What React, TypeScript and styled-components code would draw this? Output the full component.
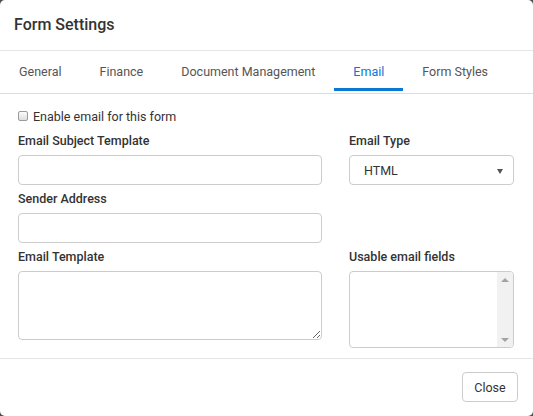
import React from "react";
import styled, { createGlobalStyle } from "styled-components";

const Global = createGlobalStyle`
  html, body { margin: 0; padding: 0; }
  body {
    background: #4d4d4d;
    font-family: Roboto, "Liberation Sans", Arial, sans-serif;
    color: #333;
  }
  * { box-sizing: border-box; }
`;

const Modal = styled.div`
  width: 533px;
  height: 416px;
  background: #fff;
  border-radius: 5px;
  display: flex;
  flex-direction: column;
  overflow: hidden;
`;

const Header = styled.div`
  height: 51px;
  padding: 0 14px;
  display: flex;
  align-items: center;
  border-bottom: 1px solid #e5e5e5;
`;

const Title = styled.h4`
  margin: 0;
  font-size: 16px;
  font-weight: 500;
  color: #333;
  line-height: 20px;
  padding-bottom: 1px;
`;

const TabBar = styled.div`
  display: flex;
  padding-bottom: 2px;
  border-bottom: 1px solid #ddd;
`;

const Tab = styled.div<{ $active?: boolean }>`
  height: 40px;
  padding: 3px 19px 0;
  display: flex;
  align-items: center;
  font-size: 12.5px;
  color: ${(p) => (p.$active ? "#0a78d7" : "#555")};
  border-bottom: 3px solid ${(p) => (p.$active ? "#0a78d7" : "transparent")};
  white-space: nowrap;
`;

const Body = styled.div`
  padding: 13px 19px 10px 18px;
  flex: 1;
`;

const CheckRow = styled.label`
  display: flex;
  align-items: center;
  gap: 5px;
  height: 18px;
  font-size: 12.5px;
  color: #333;
  margin-bottom: 7px;
`;

const Check = styled.input`
  appearance: none;
  width: 10px;
  height: 10px;
  margin: 0;
  border: 1px solid #9a9a9a;
  border-radius: 2px;
  background: linear-gradient(#fcfcfc, #dedede);
`;

const Row = styled.div`
  display: grid;
  grid-template-columns: 304px 165px;
  column-gap: 27px;
  align-items: start;
`;

const Column = styled.div`
  display: flex;
  flex-direction: column;
`;

const Group = styled.div`
  display: flex;
  flex-direction: column;
  margin-bottom: 5px;
`;

const Label = styled.div`
  font-size: 12.5px;
  font-weight: 500;
  line-height: 18px;
  color: #333;
  margin-bottom: 5px;
`;

const TextInput = styled.input`
  height: 30px;
  width: 100%;
  border: 1px solid #ccc;
  border-radius: 4px;
  padding: 0 12px;
  font-family: inherit;
  font-size: 12.5px;
  margin: 0;
`;

const SelectBox = styled.div`
  height: 30px;
  border: 1px solid #ccc;
  border-radius: 4px;
  padding: 0 10px 0 14px;
  display: flex;
  align-items: center;
  justify-content: space-between;
  font-size: 12.5px;
  color: #333;
`;

const Caret = styled.span`
  width: 0;
  height: 0;
  border-left: 3px solid transparent;
  border-right: 3px solid transparent;
  border-top: 5px solid #555;
  margin-top: 2px;
`;

const TextArea = styled.textarea`
  height: 69px;
  width: 100%;
  border: 1px solid #ccc;
  border-radius: 4px;
  padding: 6px 12px;
  font-family: inherit;
  font-size: 12.5px;
  margin: 0;
  display: block;
  resize: vertical;
`;

const ListBox = styled.div`
  height: 77px;
  border: 1px solid #ccc;
  border-radius: 4px;
  display: flex;
  overflow: hidden;
`;

const ListArea = styled.div`
  flex: 1;
`;

const ScrollTrack = styled.div`
  width: 16px;
  background: #f1f1f1;
  display: flex;
  flex-direction: column;
  justify-content: space-between;
  align-items: center;
  padding: 6px 0 5px;
`;

const Arrow = styled.span<{ $down?: boolean }>`
  width: 0;
  height: 0;
  border-left: 4px solid transparent;
  border-right: 4px solid transparent;
  ${(p) =>
    p.$down
      ? "border-top: 4px solid #a3a3a3;"
      : "border-bottom: 4px solid #a3a3a3;"}
`;

const Footer = styled.div`
  border-top: 1px solid #e5e5e5;
  padding: 13px 15px 14px;
  display: flex;
  justify-content: flex-end;
`;

const Button = styled.button`
  height: 30px;
  width: 56px;
  background: #fff;
  border: 1px solid #ccc;
  border-radius: 4px;
  font-family: inherit;
  font-size: 12.5px;
  color: #333;
  padding: 0;
`;

export default function App() {
  const tabs = ["General", "Finance", "Document Management", "Email", "Form Styles"];
  return (
    <>
      <Global />
      <Modal>
        <Header>
          <Title>Form Settings</Title>
        </Header>
        <TabBar>
          {tabs.map((t) => (
            <Tab key={t} $active={t === "Email"}>
              {t}
            </Tab>
          ))}
        </TabBar>
        <Body>
          <CheckRow>
            <Check type="checkbox" />
            Enable email for this form
          </CheckRow>
          <Row>
            <Column>
              <Group>
                <Label>Email Subject Template</Label>
                <TextInput />
              </Group>
              <Group>
                <Label>Sender Address</Label>
                <TextInput />
              </Group>
            </Column>
            <Column>
              <Group>
                <Label>Email Type</Label>
                <SelectBox>
                  HTML
                  <Caret />
                </SelectBox>
              </Group>
            </Column>
          </Row>
          <Row>
            <Column>
              <Label>Email Template</Label>
              <TextArea />
            </Column>
            <Column>
              <Label>Usable email fields</Label>
              <ListBox>
                <ListArea />
                <ScrollTrack>
                  <Arrow />
                  <Arrow $down />
                </ScrollTrack>
              </ListBox>
            </Column>
          </Row>
        </Body>
        <Footer>
          <Button>Close</Button>
        </Footer>
      </Modal>
    </>
  );
}
